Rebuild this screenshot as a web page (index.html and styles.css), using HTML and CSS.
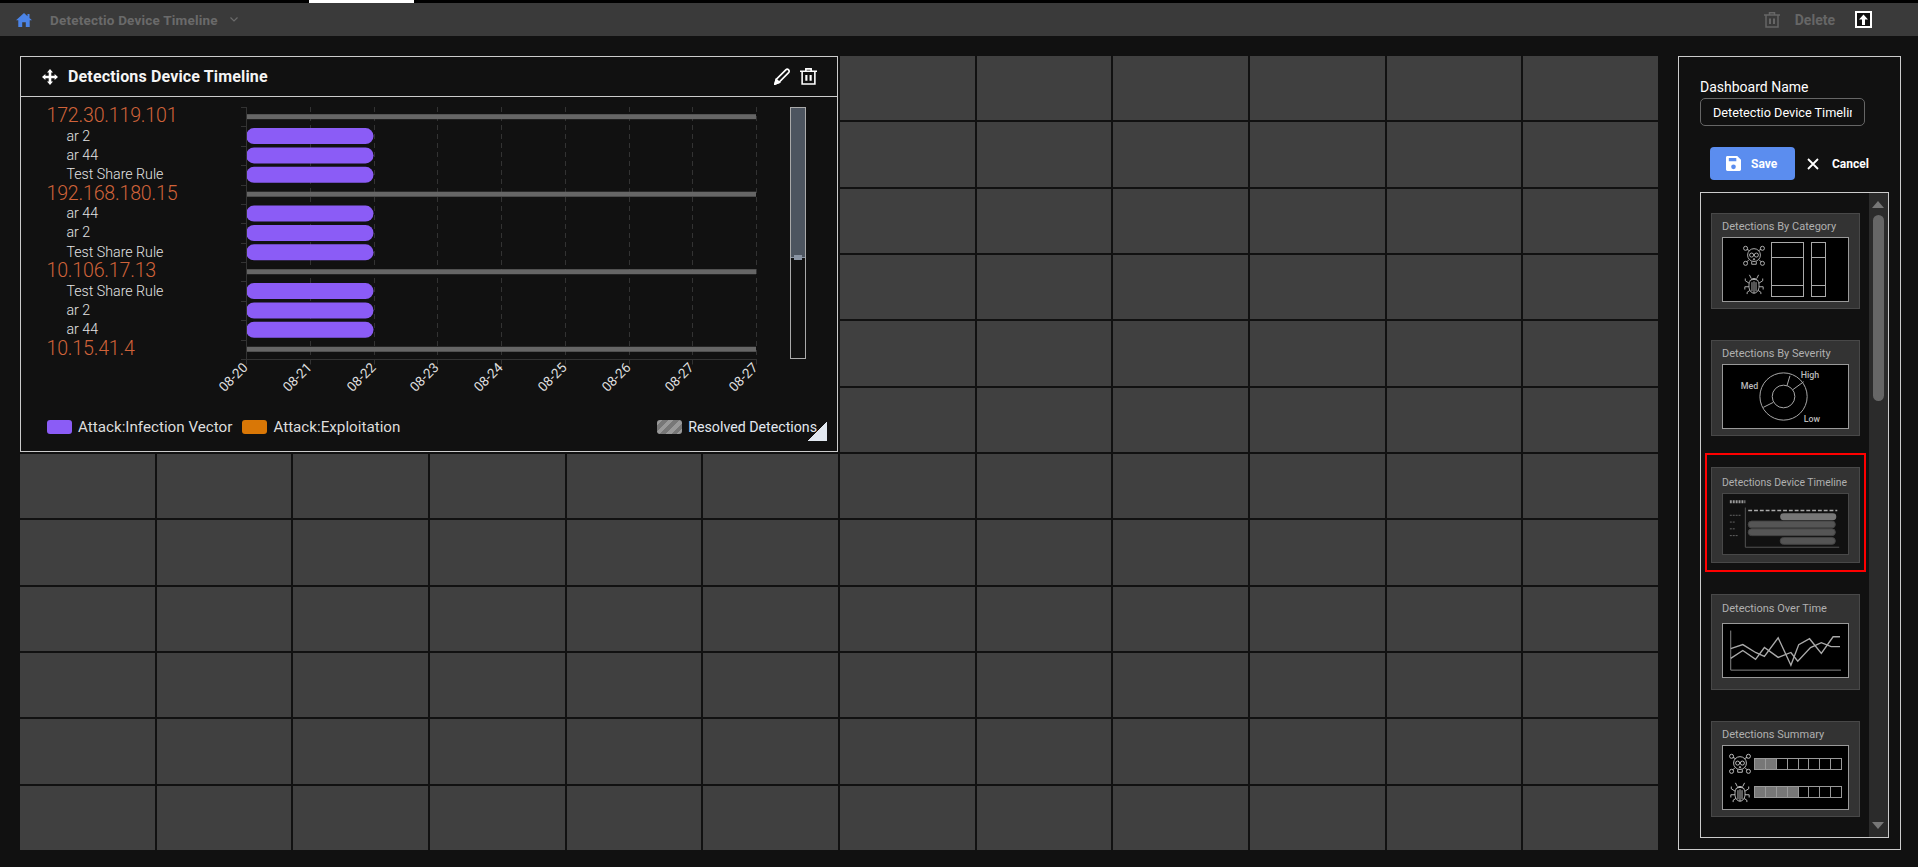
FILE: index.html
```html
<!DOCTYPE html>
<html lang="en">
<head>
  <meta charset="UTF-8">
  <title>Detetectio Device Timeline</title>
  <link rel="stylesheet" href="styles.css">
</head>
<body>
  <svg class="icon-defs" width="0" height="0">
    <symbol id="skull" viewBox="0 0 24 24" fill="none" stroke="currentColor" stroke-width="1">
      <circle cx="12" cy="11" r="7"/>
      <circle cx="9.4" cy="11" r="2.2"/>
      <circle cx="14.6" cy="11" r="2.2"/>
      <path d="M9.500 18v3h5v-3M12 14.500l-.8 1.500h1.600zM7 6L4.200 4.800M17 6l2.800-1.200M6.500 16l-2.300 2.400M17.500 16l2.300 2.400"/>
      <circle cx="2.800" cy="3.600" r="2.200"/>
      <circle cx="21.200" cy="3.600" r="2.200"/>
      <circle cx="2.800" cy="20" r="2.200"/>
      <circle cx="21.200" cy="20" r="2.200"/>
    </symbol>
    <symbol id="bug" viewBox="0 0 24 24" fill="none" stroke="currentColor" stroke-width="1">
      <path d="M12 6c-3.500 0-5.500 3-5.500 8s2.500 8 5.500 8 5.500-3 5.500-8-2-8-5.500-8zM12 9v13M8 8.500c1-2 7-2 8 0M9.800 10v10M14.200 10v10"/>
      <path d="M9 6L7 2M15 6l2-4M6.500 11L2.500 8.500V6M17.500 11l4-2.500V6M6.500 15H2v3M17.500 15H22v3M7.500 19l-3 2v2M16.500 19l3 2v2"/>
    </symbol>
    <symbol id="trash" viewBox="0 0 16 16" fill="none" stroke="currentColor" stroke-width="1.500">
      <path d="M0 3h16M2 3v12h12V3M5.500 3V.8h5V3"/>
      <path d="M6 6.500v5.500M10 6.500v5.500" stroke-width="2"/>
    </symbol>
  </svg>

  <header class="topbar">
    <div class="crumbs">
      <svg class="home-icon" viewBox="0 0 16 14"><path d="M8 0L0 7.200h2.300V14h3.900V9.200h3.600V14h3.900V7.200H16L13.500 5V1h-2v2.200z"/></svg>
      <span class="crumb-title">Detetectio Device Timeline</span>
      <svg class="chevron" viewBox="0 0 8 5"><path d="M.5.5L4 4 7.500.5"/></svg>
    </div>
    <div class="top-actions">
      <svg class="top-trash"><use href="#trash"/></svg>
      <span class="delete-label">Delete</span>
      <svg class="export-icon" viewBox="0 0 17 17">
        <rect x="1" y="1" width="15" height="15"/>
        <path d="M8.500 3.500L4 8.500h3V14h3V8.500h3z"/>
      </svg>
    </div>
  </header>

  <main class="content">
    <section class="grid" id="grid">
      <article class="widget">
        <div class="widget-head">
          <svg class="move-icon" viewBox="0 0 16 16"><path d="M8 0l3 3.400H9.300v3.300h3.300V5L16 8l-3.400 3V9.300H9.300v3.300H11L8 16l-3-3.400h1.700V9.300H3.400V11L0 8l3.400-3v1.700h3.300V3.400H5z"/></svg>
          <h2>Detections Device Timeline</h2>
          <svg class="pencil-icon" viewBox="0 0 17 17"><path d="M1 16l1.200-4.500L11.800 1.900c.8-.8 2-.8 2.800 0s.8 2 0 2.800L5 14.300z"/><path d="M1 16l1.300-4.400 3 2.900z" class="pencil-tip"/></svg>
          <svg class="head-trash"><use href="#trash"/></svg>
        </div>
        <div class="widget-body">
          <svg class="chart" id="chart" viewBox="21 97 760 300" width="760" height="300"></svg>
          <div class="zoom-slider"><div class="zoom-fill"></div></div>
        </div>
        <div class="legend">
          <span class="swatch purple"></span><span class="legend-text">Attack:Infection Vector</span>
          <span class="swatch orange"></span><span class="legend-text">Attack:Exploitation</span>
          <span class="swatch hatch"></span><span class="legend-text resolved">Resolved Detections</span>
        </div>
        <div class="resize-corner"></div>
      </article>
    </section>

    <aside class="side-panel">
      <label class="name-label" for="dashName">Dashboard Name</label>
      <input class="name-input" id="dashName" type="text" value="Detetectio Device Timeline">
      <div class="side-actions">
        <button class="save-btn">
          <svg viewBox="0 0 16 16"><path d="M1.500 0H12l4 4v10.500c0 .8-.7 1.500-1.500 1.500h-13C.7 16 0 15.300 0 14.500v-13C0 .7.700 0 1.500 0zM3 2v3.500h8V2zm5 7a2.500 2.500 0 100 5 2.500 2.500 0 000-5z" fill-rule="evenodd"/></svg>
          Save
        </button>
        <button class="cancel-btn">
          <svg viewBox="0 0 12 12"><path d="M1 1l10 10M11 1L1 11"/></svg>
          Cancel
        </button>
      </div>
      <div class="catalog">
        <div class="catalog-list">
          <div class="tile">
            <div class="tile-title">Detections By Category</div>
            <div class="preview cat-preview">
              <div class="cat-icons">
                <svg><use href="#skull"/></svg>
                <svg><use href="#bug"/></svg>
              </div>
              <div class="cat-bar wide"><i></i><i class="tall"></i><i></i></div>
              <div class="cat-bar narrow"><i></i><i class="tall"></i><i></i></div>
            </div>
          </div>
          <div class="tile">
            <div class="tile-title">Detections By Severity</div>
            <div class="preview">
              <svg class="thumb" viewBox="0 0 125 64">
                <circle cx="60.500" cy="32" r="24"/>
                <circle cx="60.500" cy="32" r="11.500"/>
                <path d="M64 21l3-10M70 25l11-8M50 38l-10 5"/>
                <text x="17" y="24">Med</text>
                <text x="78" y="13">High</text>
                <text x="81" y="58">Low</text>
              </svg>
            </div>
          </div>
          <div class="tile selected">
            <div class="tile-title">Detections Device Timeline</div>
            <div class="preview dark">
              <svg class="thumb" viewBox="0 0 127 62">
                <path class="mini-dash" d="M6 8h16" stroke-dasharray="2 1" stroke-width="3"/>
                <path class="mini-faint" d="M6 22h12M6 29h5M6 36h5M6 43h9" stroke-dasharray="2 1"/>
                <path class="mini-axis" d="M22 14v41h97"/>
                <path class="mini-top" d="M25 17h92" stroke-dasharray="4 2" stroke-width="1.500"/>
                <rect class="mini-lit" x="58" y="20" width="58" height="7" rx="3.500"/>
                <rect class="mini-bar" x="25" y="28" width="90" height="7" rx="3.500"/>
                <rect class="mini-bar" x="25" y="36" width="90" height="7" rx="3.500"/>
                <rect class="mini-bar" x="58" y="45" width="57" height="7" rx="3.500"/>
              </svg>
            </div>
          </div>
          <div class="tile over-time">
            <div class="tile-title">Detections Over Time</div>
            <div class="preview">
              <svg class="thumb" viewBox="0 0 125 54">
                <path class="line-axis" d="M6.700 6.700V47H119"/>
                <path class="line-a" d="M6.700 25L19 21l13 8 9 4 14-19 13 28 8-21 11-6 12 15 12-17h7"/>
                <path class="line-a" d="M6.700 35L19 27l13 9 9-12 14 10 13-5 7 9 13-14 11-5 10 4h9"/>
              </svg>
            </div>
          </div>
          <div class="tile">
            <div class="tile-title">Detections Summary</div>
            <div class="preview sum-preview">
              <div class="sum-row">
                <svg><use href="#skull"/></svg>
                <div class="sum-track"><b></b><b></b><i></i><i></i><i></i><i></i><i></i><i></i></div>
              </div>
              <div class="sum-row">
                <svg><use href="#bug"/></svg>
                <div class="sum-track"><b></b><b></b><b></b><b></b><i></i><i></i><i></i><i></i></div>
              </div>
            </div>
          </div>
        </div>
        <div class="catalog-scroll">
          <span class="arrow up"></span>
          <span class="scroll-thumb"></span>
          <span class="arrow down"></span>
        </div>
      </div>
    </aside>
  </main>

  <script>
    const grid = document.getElementById("grid");
    for (let i = 0; i < 108; i++) {
      const cell = document.createElement("div");
      cell.className = "cell";
      grid.appendChild(cell);
    }

    // timeline chart, drawn in page coordinates (see the viewBox)
    const chart = document.getElementById("chart");
    const rows = [
      { ip: "172.30.119.101" }, { rule: "ar 2" }, { rule: "ar 44" }, { rule: "Test Share Rule" },
      { ip: "192.168.180.15" }, { rule: "ar 44" }, { rule: "ar 2" }, { rule: "Test Share Rule" },
      { ip: "10.106.17.13" }, { rule: "Test Share Rule" }, { rule: "ar 2" }, { rule: "ar 44" },
      { ip: "10.15.41.4" }
    ];
    const days = ["08-20", "08-21", "08-22", "08-23", "08-24", "08-25", "08-26", "08-27", "08-27"];
    const chartTop = 107, pitch = 19.38, axisX = 246.5, chartBottom = 359.5;
    let out = "";

    days.forEach((day, i) => {
      const x = Math.round(246 + i * 63.75) + 0.5;
      if (i > 0) out += `<line class="grid-line" x1="${x}" x2="${x}" y1="${chartTop}" y2="${chartBottom}"/>`;
      out += `<line class="axis" x1="${x}" x2="${x}" y1="${chartBottom}" y2="${chartBottom + 5}"/>`;
      out += `<text class="day" transform="translate(${x + 2} ${chartBottom + 9}) rotate(-45)">${day}</text>`;
    });

    rows.forEach((row, i) => {
      const y = chartTop + pitch * (i + 0.5);
      const tick = Math.round(chartTop + pitch * i) + 0.5;
      out += `<line class="axis" x1="241" x2="${axisX}" y1="${tick}" y2="${tick}"/>`;
      if (row.ip) {
        out += `<rect class="ip-band" x="247" y="${y - 2.5}" width="509" height="5"/>`;
        out += `<text class="ip" x="46.5" y="${y + 5.5}">${row.ip}</text>`;
      } else {
        out += `<rect class="event" x="246" y="${y - 8}" width="127.5" height="16" rx="8"/>`;
        out += `<text class="rule" x="66.5" y="${y + 4.5}">${row.rule}</text>`;
      }
    });

    out += `<line class="axis" x1="${axisX}" x2="${axisX}" y1="${chartTop}" y2="${chartBottom}"/>`;
    out += `<line class="axis" x1="241" x2="757" y1="${chartBottom}" y2="${chartBottom}"/>`;
    chart.innerHTML = out;
  </script>
</body>
</html>
```

FILE: styles.css
```css
* {
  box-sizing: border-box;
}

html, body {
  height: 100%;
}

body {
  margin: 0;
  overflow: hidden;
  background-color: #111;
  color: #fff;
  font-family: 'Roboto', sans-serif;
}

.icon-defs {
  position: absolute;
}

.topbar {
  display: flex;
  align-items: center;
  justify-content: space-between;
  height: 36px;
  border-top: 3px solid #000;
  background-color: #3a3a3a;
  position: relative;
}

/* the white strip on the top edge */
.topbar::before {
  content: "";
  position: absolute;
  left: 309px;
  top: -3px;
  width: 105px;
  height: 3px;
  background-color: #fff;
}

.crumbs {
  display: flex;
  align-items: center;
  padding-left: 16px;
}

.home-icon {
  width: 16px;
  height: 14px;
  fill: #4b84e8;
}

.crumb-title {
  margin-left: 18px;
  font-size: 13.5px;
  font-weight: 700;
  letter-spacing: 0.2px;
  color: #6a6a6a;
}

.chevron {
  width: 8px;
  height: 5px;
  margin-left: 12px;
  fill: none;
  stroke: #6a6a6a;
  stroke-width: 1.2;
}

.top-actions {
  display: flex;
  align-items: center;
  padding-right: 46px;
}

.top-trash {
  width: 16px;
  height: 16px;
  color: #666;
}

.delete-label {
  margin-left: 15px;
  font-size: 14px;
  font-weight: 700;
  color: #666;
}

.export-icon {
  width: 17px;
  height: 17px;
  margin-left: 20px;
}

.export-icon rect {
  fill: #111;
  stroke: #fff;
  stroke-width: 2;
}

.export-icon path {
  fill: #fff;
}

.content {
  display: flex;
  align-items: flex-start;
  padding: 20px 17px 0 20px;
}

.grid {
  display: grid;
  grid-template-columns: repeat(12, 1fr);
  grid-template-rows: repeat(12, 1fr);
  gap: 2px;
  width: 1638px;
  height: 794px;
}

.cell {
  background-color: #404040;
}

.widget {
  grid-column: 1 / span 6;
  grid-row: 1 / span 6;
  position: relative;
  display: flex;
  flex-direction: column;
  border: 1px solid #ccc;
  background-color: #111;
}

.widget-head {
  display: flex;
  align-items: center;
  height: 40px;
  padding: 0 20px 0 21px;
  border-bottom: 1px solid #ccc;
}

.widget-head h2 {
  flex: 1;
  margin: 0 0 0 10px;
  font-size: 16px;
  font-weight: 700;
  letter-spacing: 0.15px;
  color: #f4f4f4;
}

.move-icon {
  width: 16px;
  height: 16px;
  fill: #fff;
}

.pencil-icon {
  width: 17px;
  height: 17px;
  fill: none;
  stroke: #fff;
  stroke-width: 1.7;
}

.pencil-tip {
  fill: #fff;
}

.head-trash {
  width: 17px;
  height: 17px;
  margin-left: 9px;
  color: #fff;
}

.widget-body {
  display: flex;
  height: 300px;
}

.chart {
  flex: none;
}

.chart .axis {
  stroke: #333;
}

.chart .grid-line {
  stroke: #333;
  stroke-dasharray: 5 4;
}

.chart .ip-band {
  fill: #666;
}

.chart .event {
  fill: #8b5cf6;
}

.chart .ip {
  font-size: 19.6px;
  font-weight: 300;
  letter-spacing: -0.2px;
  fill: #d0633a;
}

.chart .rule {
  font-size: 14.2px;
  font-weight: 300;
  fill: #e4e4e4;
}

.chart .day {
  font-size: 13.5px;
  fill: #ddd;
  text-anchor: end;
}

.zoom-slider {
  flex: none;
  align-self: flex-start;
  width: 16px;
  height: 252px;
  margin: 10px 0 0 9px;
  border: 1px solid #aaa;
}

.zoom-fill {
  position: relative;
  height: 150px;
  border-bottom: 1px solid #8a94a3;
  background-color: #4d5560;
}

.zoom-fill::after {
  content: "";
  position: absolute;
  left: 3px;
  bottom: -3px;
  width: 8px;
  height: 5px;
  background-color: #8a94a3;
}

.legend {
  display: flex;
  align-items: center;
  height: 30px;
  margin-top: 15px;
  padding: 0 20px 0 26px;
  font-size: 15.2px;
  color: #ddd;
}

.swatch {
  flex: none;
  width: 25px;
  height: 14px;
  border-radius: 3px;
  margin-right: 6px;
}

.swatch.purple {
  background-color: #8b5cf6;
}

.swatch.orange {
  margin-left: 10px;
  background-color: #d97706;
}

.swatch.hatch {
  margin-left: auto;
  background: repeating-linear-gradient(135deg, #999 0 4px, #777 4px 8px);
}

.legend-text.resolved {
  font-size: 14.2px;
  color: #e2e8f0;
}

.resize-corner {
  position: absolute;
  right: 10px;
  bottom: 10px;
  width: 20px;
  height: 20px;
  background: linear-gradient(135deg, transparent 50%, #e2e8f0 50%);
}

.side-panel {
  flex: none;
  width: 223px;
  height: 794px;
  margin-left: 20px;
  padding: 22px 12px 11px 21px;
  border: 1px solid #ccc;
}

.name-label {
  display: block;
  font-size: 14px;
  line-height: 16px;
}

.name-input {
  display: block;
  width: 165px;
  height: 28px;
  margin-top: 3px;
  padding: 0 12px;
  border: 1px solid #666;
  border-radius: 5px;
  background-color: #111;
  color: #fff;
  font-family: 'Roboto', sans-serif;
  font-size: 12.7px;
}

.side-actions {
  display: flex;
  align-items: center;
  margin: 21px 0 12px 10px;
}

.side-actions button {
  display: flex;
  align-items: center;
  height: 33px;
  border: none;
  color: #fff;
  font-family: 'Roboto', sans-serif;
  font-size: 12px;
  font-weight: 700;
  cursor: pointer;
}

.save-btn {
  width: 85px;
  padding: 0 0 0 16px;
  border-radius: 4px;
  background-color: #5b8def;
}

.save-btn svg {
  width: 15px;
  height: 15px;
  margin-right: 10px;
  fill: #fff;
}

.cancel-btn {
  padding: 0 0 0 12px;
  background: none;
}

.cancel-btn svg {
  width: 12px;
  height: 12px;
  margin-right: 13px;
  fill: none;
  stroke: #fff;
  stroke-width: 1.8;
}

.catalog {
  display: flex;
  width: 189px;
  height: 646px;
  border: 1px solid #ccc;
}

.catalog-list {
  flex: 1;
  min-width: 0;
  padding: 20px 9px 0 10px;
}

.catalog-scroll {
  flex: none;
  position: relative;
  width: 19px;
  background-color: #2b2b2b;
}

.arrow {
  position: absolute;
  left: 3px;
  border-left: 6.5px solid transparent;
  border-right: 6.5px solid transparent;
}

.arrow.up {
  top: 8px;
  border-bottom: 7px solid #777;
}

.arrow.down {
  bottom: 8px;
  border-top: 7px solid #777;
}

.scroll-thumb {
  position: absolute;
  left: 4px;
  top: 22px;
  width: 11px;
  height: 186px;
  border-radius: 6px;
  background-color: #666;
}

.tile {
  position: relative;
  height: 96px;
  margin-bottom: 31px;
  padding: 5px 10px 0;
  border: 1px solid #484848;
  background-color: #333;
}

.tile.selected {
  padding-top: 7px;
}

.tile.selected .tile-title {
  font-size: 10.4px;
}

.tile.over-time {
  padding-top: 6px;
}

.tile.over-time .tile-title {
  height: 22px;
}

.tile.selected::after {
  content: "";
  position: absolute;
  left: -7px;
  right: -7px;
  top: -15px;
  bottom: -10px;
  border: 2px solid #f00;
}

.tile-title {
  height: 18px;
  font-size: 11px;
  line-height: 15px;
  white-space: nowrap;
  color: #b0b0b0;
}

.preview {
  height: 65px;
  border: 1px solid #999;
  background-color: #000;
}

.preview.dark {
  height: 62px;
  border-color: #484848;
  background-color: #111;
}

.over-time .preview {
  height: 55px;
}

.thumb {
  display: block;
  width: 100%;
  height: 100%;
  fill: none;
  stroke: #aaa;
}

.thumb text {
  fill: #bbb;
  stroke: none;
  font-size: 9px;
  font-weight: 500;
}

.thumb .mini-dash {
  stroke: #999;
}

.thumb .mini-faint {
  stroke: #666;
}

.thumb .mini-axis {
  stroke: #555;
}

.thumb .mini-top {
  stroke: #aaa;
}

.thumb .mini-lit {
  fill: #777;
  stroke: none;
}

.thumb .mini-bar {
  fill: #555;
  stroke: #444;
}

.thumb .line-axis {
  stroke: #888;
}

.thumb .line-a {
  stroke: #aaa;
  stroke-width: 1.4;
}

.cat-preview {
  display: flex;
  align-items: center;
  padding-left: 20px;
  color: #bbb;
}

.cat-icons {
  display: flex;
  flex-direction: column;
  gap: 6px;
  margin-right: 6px;
}

.cat-icons svg {
  display: block;
  width: 22px;
  height: 22px;
}

.cat-bar {
  display: flex;
  flex-direction: column;
  height: 55px;
  border: 1px solid #aaa;
}

.cat-bar i {
  display: block;
  height: 14px;
  flex: none;
}

.cat-bar i.tall {
  height: 29px;
  border-top: 1px solid #aaa;
  border-bottom: 1px solid #aaa;
}

.cat-bar.wide {
  width: 33px;
}

.cat-bar.narrow {
  width: 15px;
  margin-left: 7px;
}

.sum-preview {
  display: flex;
  flex-direction: column;
  justify-content: center;
  gap: 6px;
  padding-left: 6px;
  color: #ccc;
}

.sum-row {
  display: flex;
  align-items: center;
  gap: 3px;
}

.sum-row svg {
  width: 22px;
  height: 22px;
}

.sum-track {
  display: flex;
  width: 88px;
  height: 12px;
  border: 1px solid #999;
}

.sum-track b,
.sum-track i {
  flex: 1;
  border-right: 1px solid #999;
}

.sum-track b {
  background-color: #777;
}

.sum-track i:last-child {
  border-right: none;
}
```
